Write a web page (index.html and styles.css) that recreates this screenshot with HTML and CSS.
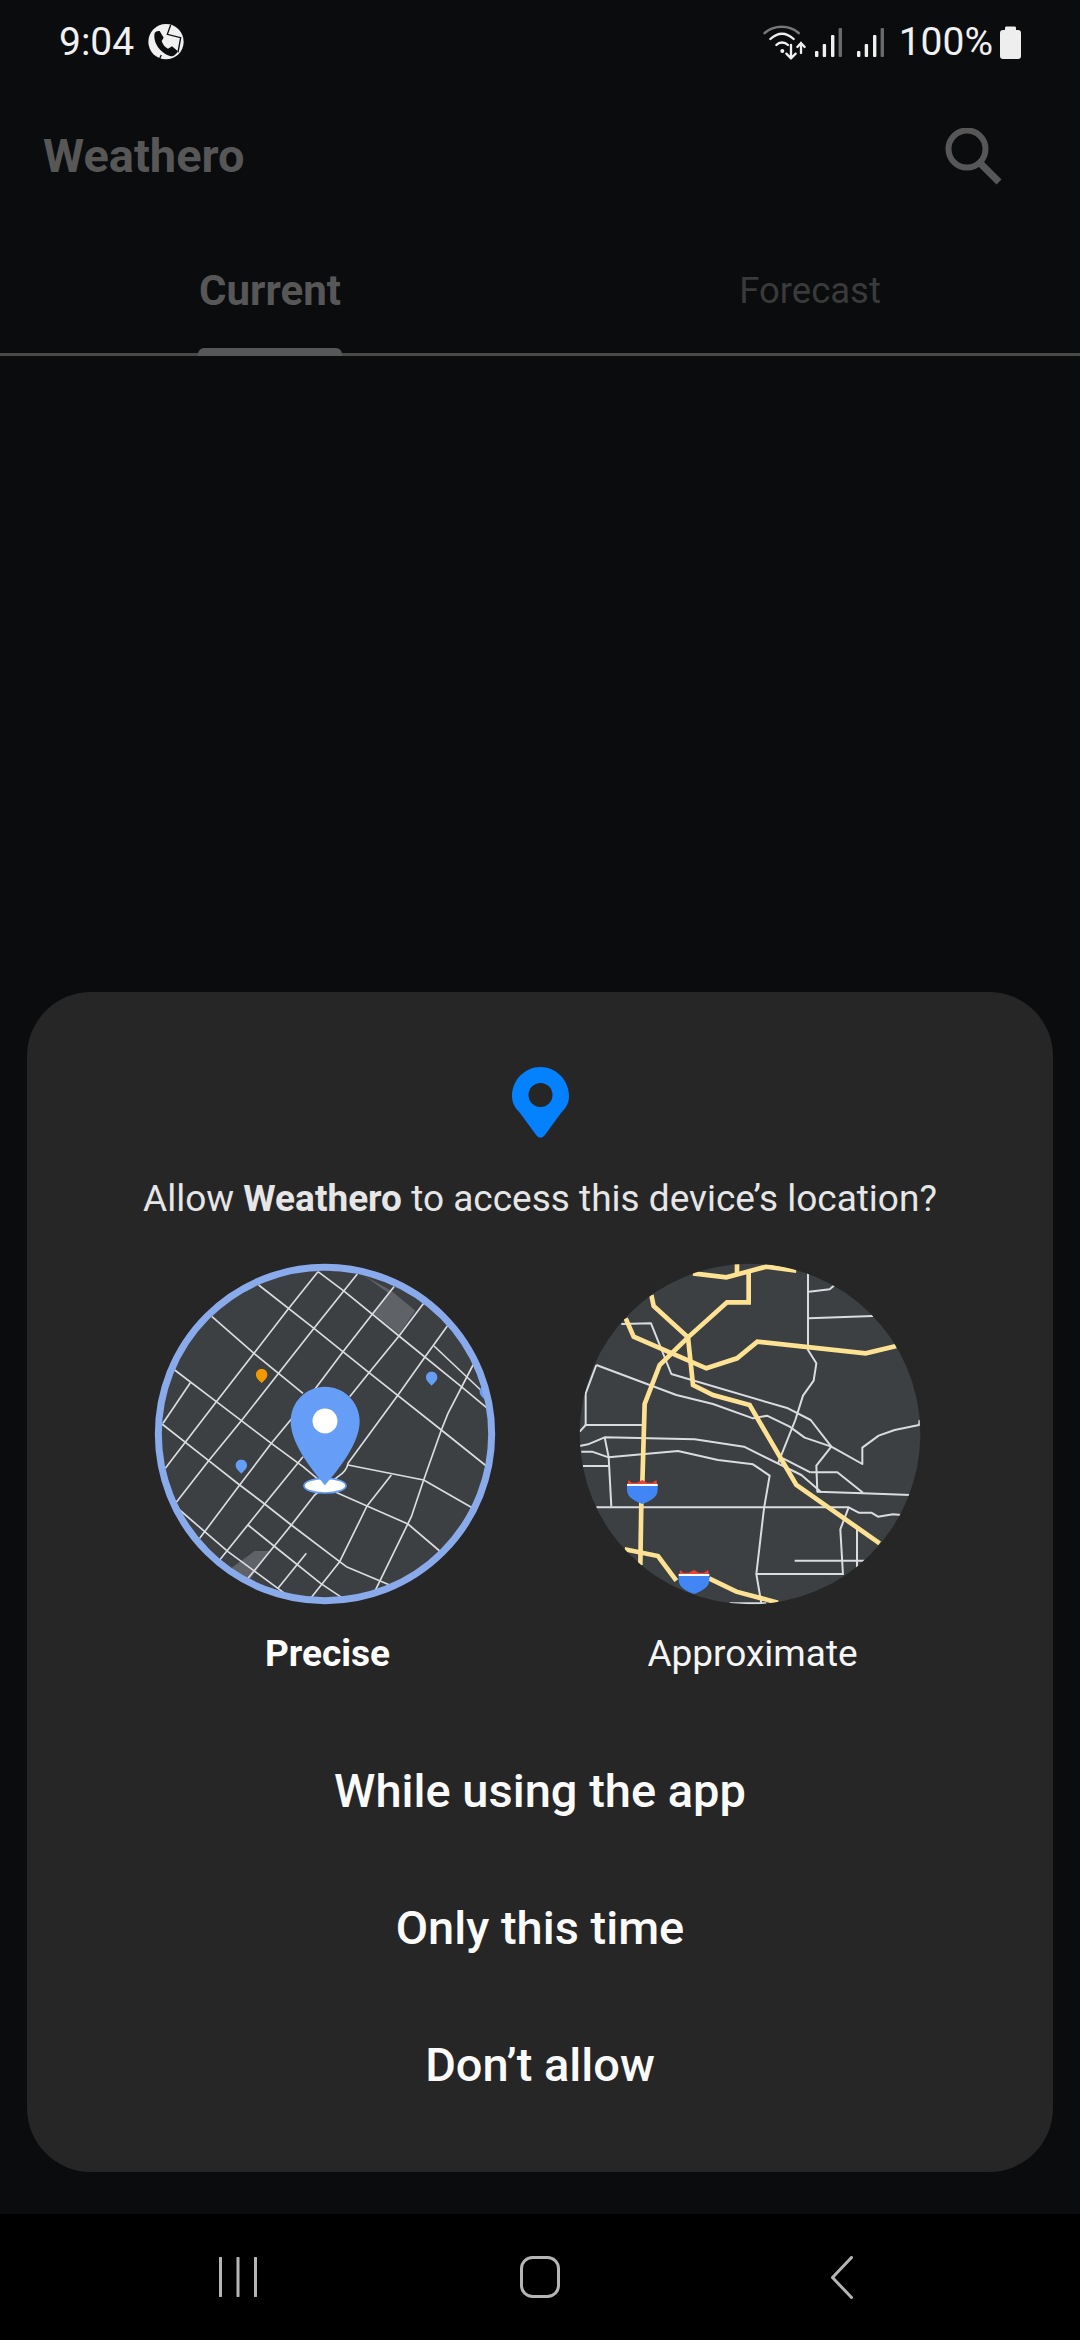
FILE: index.html
```html
<!DOCTYPE html>
<html lang="en">
<head>
<meta charset="utf-8">
<title>Weathero</title>
<link rel="stylesheet" href="styles.css">
</head>
<body>
<div class="screen">
  <header class="status">
    <div class="status-left">
      <span class="clock">9:04</span>
      <svg class="call-icon" viewBox="0 0 150 165">
        <circle cx="78" cy="80" r="53" fill="#f0f0f0"/>
        <path d="M44 54 C38 82 60 114 92 124 C100 125 110 118 113 108 L96 94 L84 101 C74 96 68 88 65 78 L71 68 L59 48 C52 47 47 49 44 54 Z" fill="#0a0c0e"/>
        <path d="M92 30 L82 58 L122 68 L114 112 M64 120 L56 136 L54 150" fill="none" stroke="#0a0c0e" stroke-width="4"/>
      </svg>
    </div>
    <div class="status-right">
      <svg class="wifi-icon" viewBox="0 0 135 111">
        <g fill="none" stroke-linecap="round">
          <path d="M8 24 C36 -1 82 -1 110 24" stroke="#777" stroke-width="8"/>
          <path d="M25 42 C48 21 72 21 95 42" stroke="#f0f0f0" stroke-width="7"/>
          <path d="M43 60 C52 50 68 50 78 60" stroke="#f0f0f0" stroke-width="7"/>
          <path d="M87 60 V100 M73 86 L87 100 L101 86 M117 84 V54 M106 66 L117 54 L128 66" stroke="#f0f0f0" stroke-width="7"/>
        </g>
        <circle cx="61" cy="78" r="6" fill="#f0f0f0"/>
      </svg>
      <svg class="signal-icon" viewBox="0 0 28 29">
        <rect x="0" y="23" width="3.4" height="6" rx="1" fill="#f0f0f0"/>
        <rect x="7.7" y="16" width="3.4" height="13" rx="1" fill="#f0f0f0"/>
        <rect x="16" y="7" width="3.4" height="22" rx="1" fill="#f0f0f0"/>
        <rect x="23.6" y="0" width="3.4" height="29" rx="1" fill="#6a6a6a"/>
      </svg>
      <svg class="signal-icon" viewBox="0 0 28 29">
        <rect x="0" y="23" width="3.4" height="6" rx="1" fill="#f0f0f0"/>
        <rect x="7.7" y="16" width="3.4" height="13" rx="1" fill="#f0f0f0"/>
        <rect x="16" y="7" width="3.4" height="22" rx="1" fill="#f0f0f0"/>
        <rect x="23.6" y="0" width="3.4" height="29" rx="1" fill="#6a6a6a"/>
      </svg>
      <span class="battery-text">100%</span>
      <svg class="battery-icon" viewBox="0 0 21 33">
        <path d="M6 0.5 H15 Q16 0.5 16 2 V4 H18 Q21 4 21 7 V30 Q21 33 18 33 H3 Q0 33 0 30 V7 Q0 4 3 4 H5 V2 Q5 0.5 6 0.5 Z" fill="#eee"/>
      </svg>
    </div>
  </header>

  <div class="appbar">
    <h1 class="app-title">Weathero</h1>
    <svg class="search-icon" viewBox="0 0 57 57">
      <circle cx="22" cy="21" r="18.5" fill="none" stroke="#575757" stroke-width="6"/>
      <path d="M35 35 L54 54" fill="none" stroke="#575757" stroke-width="7"/>
    </svg>
  </div>

  <nav class="tabs">
    <div class="tab tab-active"><span class="tab-label">Current<i class="tab-indicator"></i></span></div>
    <div class="tab"><span class="tab-label">Forecast</span></div>
  </nav>

  <main class="content">
    <section class="dialog">
      <svg class="dialog-pin" viewBox="0 0 57 71">
        <path d="M28.5 0 C13 0 0 13 0 29 C0 36 3 41 8 46 L24.5 68.5 Q28.5 73 32.5 68.5 L49 46 C54 41 57 36 57 29 C57 13 44 0 28.5 0 Z" fill="#0381fe"/>
        <circle cx="28.5" cy="28" r="12" fill="#262626"/>
      </svg>
      <p class="dialog-title">Allow <b>Weathero</b> to access this device’s location?</p>
      <div class="choices">
        <div class="choice">
          <svg class="map" viewBox="0 0 1140 1140">
            <defs><clipPath id="clipA"><circle cx="561" cy="552" r="500"/></clipPath></defs>
            <circle cx="561" cy="552" r="500" fill="#3c4043"/>
            <g clip-path="url(#clipA)">
              <path d="M680 78 L760 122 L832 182 L783 252 L705 190 L750 128 Z" fill="#5f6368"/>
              <path d="M275 958 L350 903 L396 903 L335 990 Z" fill="#5f6368"/>
              <g fill="none" stroke="#dadce0" stroke-width="5" stroke-linejoin="round">
                <path d="M540 65 L450 178 L348 310 L235 455 L82 655"/>
                <path d="M658 72 L528 235 L420 372 L310 512 L212 632 L115 757"/>
                <path d="M768 110 L705 190 L615 305 L495 465 L400 580 L305 705 L185 865"/>
                <path d="M857 160 L783 258 L693 368 L635 440"/>
                <path d="M495 620 L380 762 L245 930"/>
                <path d="M928 228 L863 318 L780 435 L630 640 C628 655 615 670 600 680 L530 735 L460 825 L330 985"/>
                <path d="M157 398 L75 520"/>
                <path d="M540 65 L620 125 L783 258 L970 410 L1060 485"/>
                <path d="M362 105 L528 235 L693 368 L910 540 L1060 660"/>
                <path d="M222 200 L348 310 L495 430"/>
                <path d="M110 360 L235 455 L310 512 L400 580 L495 650 L555 700"/>
                <path d="M72 522 L212 632 L305 705 L380 762 L460 825 L605 935 L625 950 L755 1005"/>
                <path d="M125 780 L270 905 L440 1030"/>
                <path d="M330 825 L408 888 L548 1000 L615 1045"/>
                <path d="M888 288 L1060 450"/>
                <path d="M630 645 L857 690 L1005 775"/>
                <path d="M590 725 L687 768 L810 822 L905 903"/>
                <path d="M760 675 L687 768 L605 935 L518 1045"/>
                <path d="M1005 345 L930 490 L910 540 L857 690 L820 800 L710 1025"/>
                <path d="M505 910 L420 1015"/>
              </g>
              <path d="M371 399 C362 390 354 384 354 374 C354 363 362 357 371 357 C380 357 388 363 388 374 C388 384 380 390 371 399 Z" fill="#f29900"/>
              <path d="M881 407 C872 398 864 392 864 382 C864 371 872 365 881 365 C890 365 898 371 898 382 C898 392 890 398 881 407 Z" fill="#669df6"/>
              <path d="M310 671 C301 662 293 656 293 646 C293 635 301 629 310 629 C319 629 327 635 327 646 C327 656 319 662 310 671 Z" fill="#669df6"/>
              <path d="M1042 450 C1033 441 1025 435 1025 425 C1025 414 1033 408 1042 408 C1051 408 1059 414 1059 425 C1059 435 1051 441 1042 450 Z" fill="#669df6"/>
            </g>
            <circle cx="561" cy="552" r="500" fill="none" stroke="#8aabeb" stroke-width="21"/>
            <ellipse cx="561" cy="707" rx="63" ry="22" fill="#fff" stroke="#669df6" stroke-width="5"/>
            <path d="M561 706 C540 680 458 590 458 514 C458 455 505 410 561 410 C617 410 665 455 665 514 C665 590 582 680 561 706 Z" fill="#669df6"/>
            <circle cx="561" cy="513" r="37.5" fill="#fff"/>
          </svg>
          <span class="choice-label choice-selected">Precise</span>
        </div>
        <div class="choice">
          <svg class="map" viewBox="0 0 1140 1140">
            <defs>
              <clipPath id="clipB"><circle cx="561" cy="552" r="511"/></clipPath>
              <g id="shield">
                <path d="M0 18 L5 0 L14 8 L30 8 L46 0 L60 8 L76 8 L88 0 L92 18 Z" fill="#ea4335"/>
                <rect x="0" y="12" width="92" height="6" fill="#fff"/>
                <path d="M0 18 H92 V30 C92 52 68 64 46 72 C24 64 0 52 0 30 Z" fill="#4285f4"/>
              </g>
            </defs>
            <circle cx="561" cy="552" r="511" fill="#3c4043"/>
            <g clip-path="url(#clipB)">
              <g fill="none" stroke="#dadce0" stroke-width="6" stroke-linejoin="round">
                <path d="M735 70 L735 300 L760 340 L752 392 L720 437 L697 510 L645 640"/>
                <path d="M738 125 L800 118 L815 105"/>
                <path d="M738 205 L930 198"/>
                <path d="M175 222 L264 220 L325 372 L675 475 L743 510 L805 590 L898 642 L898 593 L947 557 L995 540 L1068 525 L1070 510"/>
                <path d="M100 345 L340 435 L450 462 L570 505 L612 497 L680 530 L725 563 L805 590"/>
                <path d="M805 590 L760 647 L763 725 L900 730 L1042 735"/>
                <path d="M742 667 L823 667 L900 728"/>
                <path d="M50 545 L68 525 L238 525"/>
                <path d="M68 525 L68 430 L100 345"/>
                <path d="M50 588 L75 583 L125 562 L395 568 L543 590 L715 675 L775 727"/>
                <path d="M660 625 L742 667"/>
                <path d="M125 562 L137 622 L145 770"/>
                <path d="M55 605 L87 605 L137 622 L345 603 L465 630 L570 643 L620 677 L603 775 L580 972 L595 1060"/>
                <path d="M60 648 L137 648"/>
                <path d="M100 772 L857 772 L887 788 L925 788 L945 800 L990 793 L1015 795"/>
                <path d="M857 772 L832 838 L840 975"/>
                <path d="M882 835 L882 955"/>
                <path d="M695 932 L905 932"/>
                <path d="M580 972 L840 972"/>
                <path d="M500 1060 L610 1060"/>
              </g>
              <g fill="none" stroke="#fde293" stroke-width="14" stroke-linejoin="miter">
                <path d="M390 70 L490 82 L610 50 L700 62"/>
                <path d="M522 40 L522 70"/>
                <path d="M557 65 L557 157 L492 157 L375 262 L290 345 L245 462 L238 700"/>
                <path d="M235 755 L232 945"/>
                <path d="M265 135 L272 168 L375 262 L390 405 L450 435 L560 465 L700 705 L950 880"/>
                <path d="M188 205 L212 260 L430 355 L522 325 L583 275 L908 310 L1000 288"/>
                <path d="M185 898 L285 918 L340 992"/>
                <path d="M438 985 L520 1025 L645 1058"/>
              </g>
            </g>
            <use href="#shield" x="192" y="690"/>
            <use href="#shield" x="347" y="960"/>
          </svg>
          <span class="choice-label">Approximate</span>
        </div>
      </div>
      <div class="actions">
        <div class="action">While using the app</div>
        <div class="action">Only this time</div>
        <div class="action">Don’t allow</div>
      </div>
    </section>
  </main>

  <footer class="navbar">
    <svg class="nav-icon nav-recents" viewBox="0 0 38 40">
      <path d="M1.5 1 V39 M19 1 V39 M36.5 1 V39" fill="none" stroke="#b5b5b5" stroke-width="3" stroke-linecap="round"/>
    </svg>
    <svg class="nav-icon nav-home" viewBox="0 0 40 42">
      <rect x="1.5" y="1.5" width="37" height="39" rx="11" fill="none" stroke="#b5b5b5" stroke-width="3"/>
    </svg>
    <svg class="nav-icon nav-back" viewBox="0 0 22 43">
      <path d="M20.5 1.5 L1.5 21.5 L20.5 41.5" fill="none" stroke="#b5b5b5" stroke-width="3" stroke-linecap="round" stroke-linejoin="round"/>
    </svg>
  </footer>
</div>
</body>
</html>
```
FILE: styles.css
```css
* { box-sizing: border-box; }
html, body { margin: 0; padding: 0; }
body {
  width: 1080px;
  height: 2340px;
  background: #000;
  font-family: Roboto, "Noto Sans", sans-serif;
  overflow: hidden;
}
.screen {
  width: 1080px;
  height: 2340px;
  display: flex;
  flex-direction: column;
  background: #0a0c0e;
}
.status {
  height: 84px;
  flex: none;
  padding: 0 59px 0 59px;
  display: flex;
  align-items: center;
  justify-content: space-between;
  color: #f0f0f0;
  font-size: 39px;
  line-height: 44px;
}
.status-left { display: flex; align-items: center; }
.clock { width: 81px; }
.call-icon { width: 50px; height: 55px; display: block; }
.status-right { display: flex; align-items: center; }
.wifi-icon { width: 45px; height: 37px; display: block; margin: 2px 8px 0 0; }
.signal-icon { width: 28px; height: 29px; display: block; margin-right: 14px; }
.battery-text { margin-right: 7px; }
.battery-icon { width: 21px; height: 33px; display: block; }

.appbar {
  height: 144px;
  flex: none;
  padding: 0 78px 0 43px;
  display: flex;
  align-items: center;
  justify-content: space-between;
}
.app-title {
  margin: 0;
  font-size: 47px;
  line-height: 56px;
  font-weight: 700;
  color: #575757;
}
.search-icon { width: 57px; height: 57px; display: block; }

.tabs {
  height: 128px;
  flex: none;
  display: grid;
  grid-template-columns: 1fr 1fr;
  border-bottom: 3px solid #4a4a4a;
}
.tab {
  display: flex;
  align-items: center;
  justify-content: center;
  font-size: 36.5px;
  line-height: 44px;
  color: #3a3a3a;
}
.tab-label { position: relative; }
.tab-active { color: #575757; font-weight: 700; font-size: 42px; }
.tab-indicator {
  position: absolute;
  left: -1px;
  right: -1px;
  top: 79.5px;
  height: 8px;
  background: #575757;
  border-radius: 6px 6px 0 0;
}

.content {
  flex: 1;
  display: flex;
  align-items: flex-end;
  padding: 0 27px 42px;
}
.dialog {
  width: 100%;
  height: 1180px;
  background: #262626;
  border-radius: 64px;
  padding-top: 75px;
  display: flex;
  flex-direction: column;
  align-items: center;
}
.dialog-pin { width: 57px; height: 71px; display: block; flex: none; }
.dialog-title {
  margin: 37px 0 27px;
  font-size: 37px;
  line-height: 48px;
  color: #e6e6e6;
  font-weight: 400;
}
.dialog-title b { font-weight: 700; }
.choices { display: flex; justify-content: center; gap: 45px; }
.choice { display: flex; flex-direction: column; align-items: center; }
.map { width: 380px; height: 380px; display: block; }
.choice-label {
  font-size: 37px;
  line-height: 48px;
  color: #f5f5f5;
}
.choice-selected { font-weight: 700; color: #fff; }
.actions { margin-top: 44px; width: 100%; }
.action {
  height: 137px;
  line-height: 137px;
  text-align: center;
  font-size: 47px;
  font-weight: 500;
  color: #fafafa;
}

.navbar {
  height: 126px;
  flex: none;
  background: #000;
  padding: 0 87px;
  display: grid;
  grid-template-columns: repeat(3, 1fr);
  align-items: center;
  justify-items: center;
}
.nav-icon { display: block; }
.nav-recents { width: 38px; height: 40px; }
.nav-home { width: 40px; height: 42px; }
.nav-back { width: 22px; height: 43px; }
```
